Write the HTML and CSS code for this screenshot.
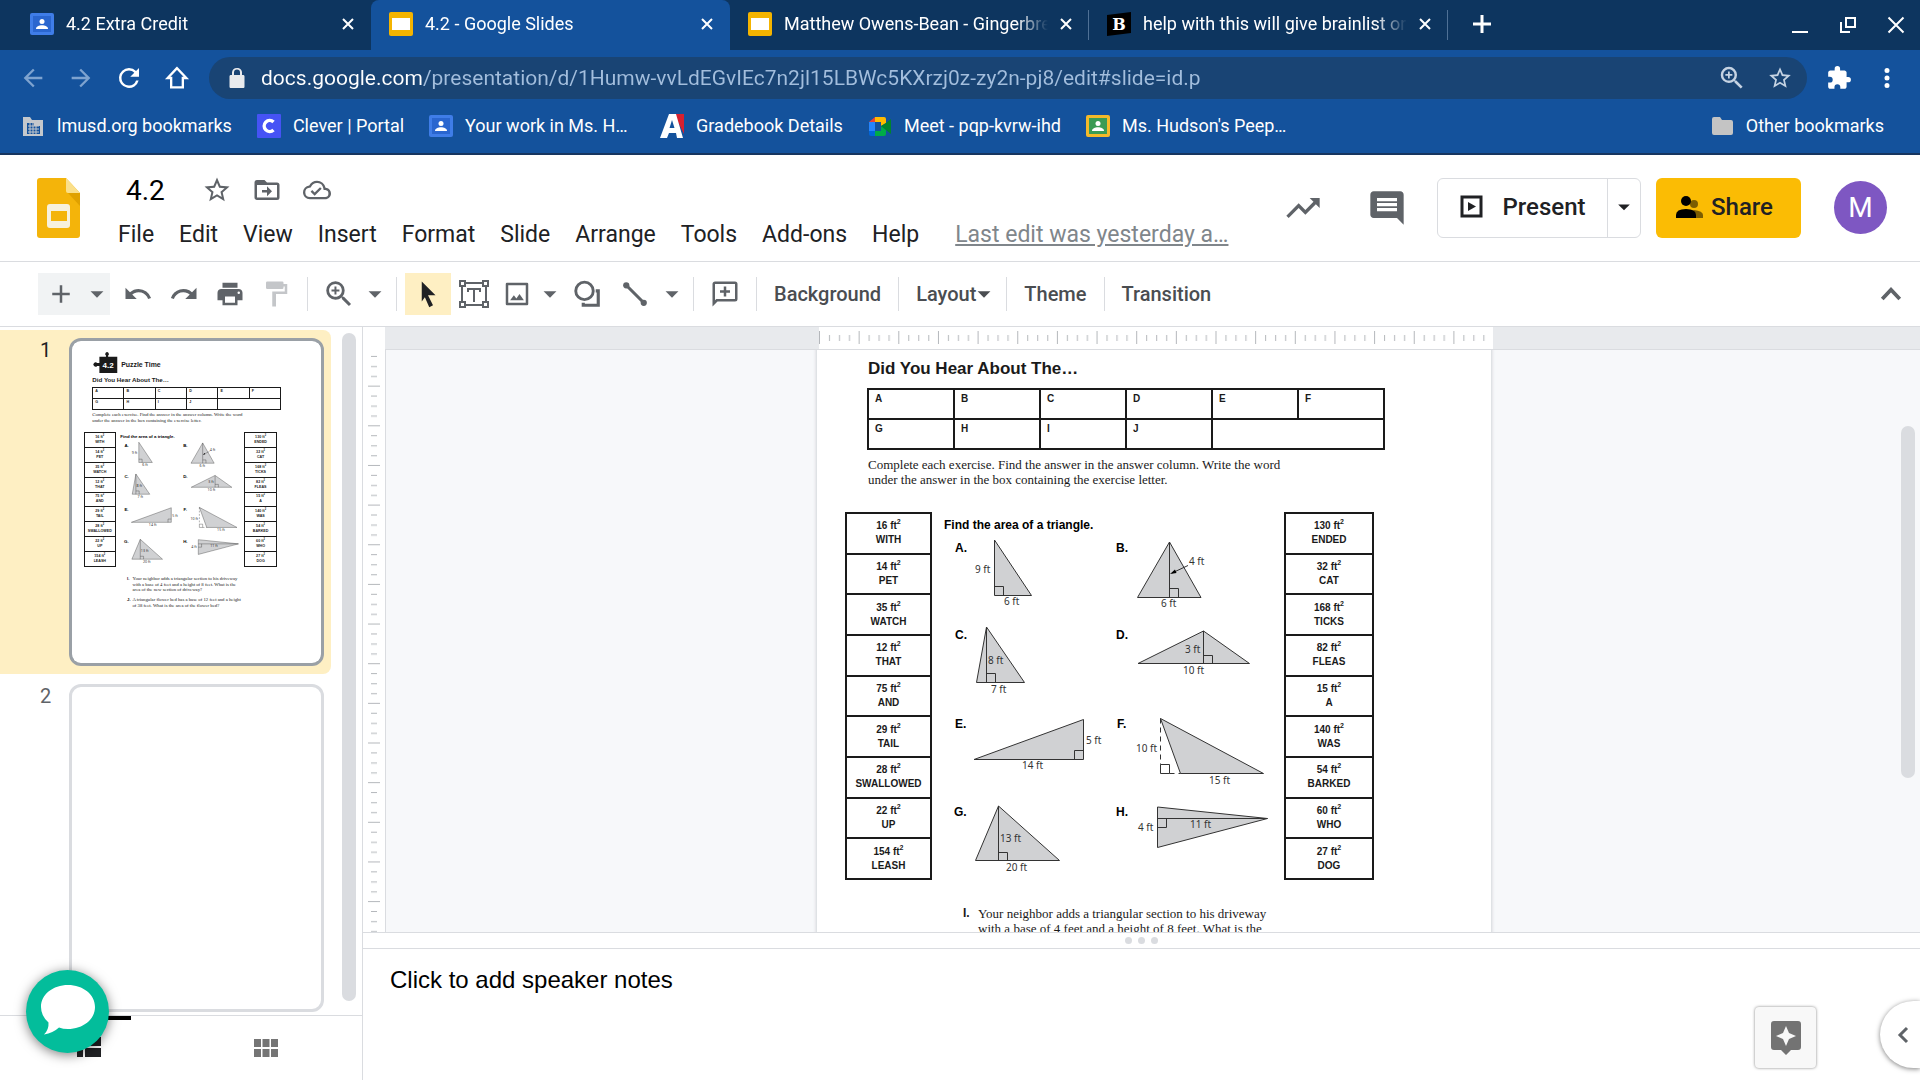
FILE: index.html
```html
<!DOCTYPE html>
<html lang="en">
<head>
    <meta charset="UTF-8">
    <meta name="viewport" content="width=device-width, initial-scale=1.0">
    <title>4.2 - Google Slides</title>
    <link rel="stylesheet" href="styles.css">
</head>
<body>
    <!-- shared icons -->
    <svg class="defs" width="0" height="0" aria-hidden="true">
        <symbol id="i-close" viewBox="0 0 14 14"><path d="M2 2l10 10M12 2L2 12" stroke="currentColor" stroke-width="2" fill="none"/></symbol>
        <symbol id="i-arrow" viewBox="0 0 24 24"><path d="M5 9h14l-7 7z" fill="currentColor"/></symbol>
        <symbol id="i-slides" viewBox="0 0 24 24"><rect width="24" height="24" rx="2" fill="#f4b400"/><rect x="3" y="6" width="18" height="12" fill="#fff"/></symbol>
        <symbol id="i-class" viewBox="0 0 24 24"><rect width="24" height="22" y="1" rx="2" fill="#3f7de8"/><rect x="3" y="4" width="18" height="16" fill="#2a66cf"/><circle cx="12" cy="9.500" r="2.500" fill="#fff"/><path d="M6 17c0-5 12-5 12 0z" fill="#fff"/></symbol>
        <symbol id="i-star" viewBox="0 0 24 24"><path fill="currentColor" d="M22 9.240l-7.190-.620L12 2 9.190 8.630 2 9.240l5.460 4.730L5.820 21 12 17.270 18.180 21l-1.630-7.030L22 9.240zM12 15.400l-3.760 2.270 1-4.280-3.320-2.880 4.380-.380L12 6.100l1.710 4.040 4.380.380-3.320 2.880 1 4.280L12 15.400z"/></symbol>
        <symbol id="i-zoom" viewBox="0 0 24 24"><path fill="currentColor" d="M15.500 14h-.790l-.280-.270A6.471 6.471 0 0 0 16 9.500 6.500 6.500 0 1 0 9.500 16c1.610 0 3.090-.590 4.230-1.570l.270.280v.790l5 4.990L20.490 19l-4.990-5zm-6 0C7.010 14 5 11.990 5 9.500S7.010 5 9.500 5 14 7.010 14 9.500 11.990 14 9.500 14zM10.200 6.700H8.800v2.100H6.700v1.400h2.100v2.100h1.400v-2.100h2.100V8.800h-2.100z"/></symbol>
    </svg>

    <div class="browser">
        <div class="tabs">
            <div class="tab">
                <svg class="fav"><use href="#i-class"/></svg>
                <span>4.2 Extra Credit</span>
                <button aria-label="Close tab"><svg><use href="#i-close"/></svg></button>
            </div>
            <div class="tab active">
                <svg class="fav"><use href="#i-slides"/></svg>
                <span>4.2 - Google Slides</span>
                <button aria-label="Close tab"><svg><use href="#i-close"/></svg></button>
            </div>
            <div class="tab divided">
                <svg class="fav"><use href="#i-slides"/></svg>
                <span>Matthew Owens-Bean - Gingerbread</span>
                <button aria-label="Close tab"><svg><use href="#i-close"/></svg></button>
            </div>
            <div class="tab divided">
                <svg class="fav" viewBox="0 0 24 24"><path d="M0 3l24-3v21L0 24z"/><text x="12" y="18" class="fav-b">B</text></svg>
                <span>help with this will give brainlist or</span>
                <button aria-label="Close tab"><svg><use href="#i-close"/></svg></button>
            </div>
            <button class="new-tab" aria-label="New tab"><svg width="18" height="18" viewBox="0 0 18 18"><path d="M9 0v18M0 9h18" stroke="#fff" stroke-width="3"/></svg></button>
            <div class="window">
                <button aria-label="Minimize"><svg width="18" height="18" viewBox="0 0 18 18"><path d="M1 16h16" stroke="#fff" stroke-width="2"/></svg></button>
                <button aria-label="Restore"><svg width="18" height="18" viewBox="0 0 18 18"><path d="M7 2h9v9H7zM2 6v10h9" stroke="#fff" stroke-width="2" fill="none"/></svg></button>
                <button aria-label="Close"><svg width="18" height="18" viewBox="0 0 18 18"><path d="M1.500 1.500l15 15M16.500 1.500l-15 15" stroke="#fff" stroke-width="2"/></svg></button>
            </div>
        </div>

        <div class="location">
            <button class="dim" aria-label="Back"><svg width="28" height="28" viewBox="0 0 24 24"><path fill="currentColor" d="M20 11H7.830l5.590-5.590L12 4l-8 8 8 8 1.410-1.410L7.830 13H20z"/></svg></button>
            <button class="dim" aria-label="Forward"><svg width="28" height="28" viewBox="0 0 24 24"><path fill="currentColor" d="M12 4l-1.410 1.410L16.170 11H4v2h12.170l-5.580 5.590L12 20l8-8z"/></svg></button>
            <button aria-label="Reload"><svg width="30" height="30" viewBox="0 0 24 24"><path fill="currentColor" d="M17.650 6.350A7.958 7.958 0 0 0 12 4a8 8 0 1 0 7.730 10h-2.080A5.990 5.990 0 0 1 12 18c-3.310 0-6-2.690-6-6s2.690-6 6-6c1.660 0 3.140.690 4.220 1.780L13 11h7V4z"/></svg></button>
            <button aria-label="Home"><svg width="28" height="28" viewBox="0 0 24 24"><path fill="none" stroke="currentColor" stroke-width="2" d="M12 3.500L4 12h3v8h10v-8h3z"/></svg></button>
            <label class="address">
                <svg width="24" height="24" viewBox="0 0 24 24"><path fill="#e8eaed" d="M18 9h-1V6.500C17 4 15 2 12 2S7 4 7 6.500V9H6c-1 0-1.500.500-1.500 1.500v10c0 1 .500 1.500 1.500 1.500h12c1 0 1.500-.500 1.500-1.500v-10C19.500 9.500 19 9 18 9zM9 9V6.500a3 3 0 0 1 6 0V9z"/></svg>
                <input aria-label="Address" value="docs.google.com/presentation/d/1Humw-vvLdEGvIEc7n2jl15LBWc5KXrzj0z-zy2n-pj8/edit#slide=id.p">
                <button aria-label="Zoom"><svg width="30" height="30"><use href="#i-zoom"/></svg></button>
                <button aria-label="Bookmark"><svg width="26" height="26"><use href="#i-star"/></svg></button>
            </label>
            <button aria-label="Extensions"><svg width="26" height="26" viewBox="0 0 24 24"><path fill="currentColor" d="M20.500 11H19V7c0-1.100-.900-2-2-2h-4V3.500a2.500 2.500 0 0 0-5 0V5H4c-1.100 0-1.990.900-1.990 2v3.800H3.500a2.700 2.700 0 0 1 0 5.400H2V20c0 1.100.900 2 2 2h3.800v-1.500a2.700 2.700 0 0 1 5.400 0V22H17c1.100 0 2-.900 2-2v-4h1.500a2.500 2.500 0 0 0 0-5z"/></svg></button>
            <button aria-label="Menu"><svg width="30" height="30" viewBox="0 0 24 24"><path fill="currentColor" d="M12 8a2 2 0 1 0 0-4 2 2 0 0 0 0 4zm0 2a2 2 0 1 0 0 4 2 2 0 0 0 0-4zm0 6a2 2 0 1 0 0 4 2 2 0 0 0 0-4z"/></svg></button>
        </div>

        <nav class="bookmarks">
            <a href="#"><svg viewBox="0 0 24 24"><path fill="#c4c8cc" d="M2 3h7l2 3h11v16H2z"/><path d="M6 9h7v3h6v8H6z" fill="#14529c"/><path d="M7 12h11M7 15h11M7 18h11M9 9v11M12 9v11M15 12v8" stroke="#c4c8cc"/></svg><span>lmusd.org bookmarks</span></a>
            <a href="#"><svg viewBox="0 0 24 24"><rect width="24" height="24" rx="1" fill="#4653f5"/><path d="M16.500 8a5.500 5.500 0 1 0 0 8" fill="none" stroke="#fff" stroke-width="3.500"/></svg><span>Clever | Portal</span></a>
            <a href="#"><svg><use href="#i-class"/></svg><span class="clipped">Your work in Ms. H…</span></a>
            <a href="#"><svg viewBox="0 0 24 24"><path d="M14 0h10v20z" fill="#d6202f"/><path d="M9 0h7l7 24h-6l-1-5H9l-2 5H0zM12 6l-2.500 8h5z" fill="#fff" fill-rule="evenodd"/></svg><span>Gradebook Details</span></a>
            <a href="#"><svg viewBox="0 0 24 24"><path d="M7 3v5H1z" fill="#ea4335"/><path d="M1 8h6v9H1z" fill="#2684fc"/><path d="M1 17h6v5H3q-2 0-2-2z" fill="#0066da"/><path d="M7 3h9q2 0 2 2v4l-5 3V8H7z" fill="#ffba00"/><path d="M7 22v-5h6v-5l5 4v4q0 2-2 2z" fill="#00ac47"/><path d="M18 9l5-4v15l-5-4-5-4z" fill="#00832d"/></svg><span>Meet - pqp-kvrw-ihd</span></a>
            <a href="#"><svg viewBox="0 0 24 24"><rect width="24" height="22" y="1" rx="2" fill="#f4b92a"/><rect x="3" y="4" width="18" height="16" fill="#3a9b54"/><circle cx="12" cy="9.500" r="2.500" fill="#fff"/><path d="M6 17c0-5 12-5 12 0z" fill="#fff"/></svg><span>Ms. Hudson's Peep…</span></a>
            <a class="other" href="#"><svg viewBox="0 0 24 24"><path fill="#c4c4c4" d="M4 3h6l2 3h9q2 0 2 2v11q0 2-2 2H4q-2 0-2-2V5q0-2 2-2z"/></svg><span>Other bookmarks</span></a>
        </nav>
    </div>

    <header class="header">
        <svg class="logo" viewBox="0 0 43 60"><path d="M3 0h26l14 15v42q0 3-3 3H3q-3 0-3-3V3q0-3 3-3z" fill="#f4b40a"/><path d="M29 0l14 15H31q-2 0-2-2z" fill="#fadf8a"/><path d="M31 15h12v13z" fill="#e0a100"/><path d="M13 26h17q3 0 3 3v18q0 3-3 3H13q-3 0-3-3V29q0-3 3-3zm1 7v10h16V33z" fill="#f7f1dc" fill-rule="evenodd"/></svg>
        <div class="doc">
            <div class="title-row">
                <input aria-label="Rename" value="4.2">
                <button aria-label="Star"><svg width="30" height="30"><use href="#i-star"/></svg></button>
                <button aria-label="Move"><svg width="30" height="30" viewBox="0 0 24 24"><path fill="currentColor" d="M20 6h-8l-2-2H4a2 2 0 0 0-2 2v12c0 1.100.900 2 2 2h16a2 2 0 0 0 2-2V8a2 2 0 0 0-2-2zm0 12H4V8h16v10zm-8-1l4-4-4-4v3H8v2h4z"/></svg></button>
                <button aria-label="Saved to Drive"><svg width="28" height="28" viewBox="0 0 24 24"><path fill="currentColor" d="M19.350 10.040A7.490 7.490 0 0 0 12 4C9.110 4 6.600 5.640 5.350 8.040A5.994 5.994 0 0 0 0 14c0 3.310 2.690 6 6 6h13c2.760 0 5-2.240 5-5 0-2.640-2.050-4.780-4.650-4.960zM19 18H6a4 4 0 0 1-.500-7.970l1.070-.110.500-.950a5.500 5.500 0 0 1 10.310 1.460l.300 1.500 1.530.110A3 3 0 0 1 19 18zm-9-3.820l-2.090-2.090L6.500 13.500 10 17l6.010-6.010-1.410-1.410z"/></svg></button>
            </div>
            <div class="menus">
                <button>File</button>
                <button>Edit</button>
                <button>View</button>
                <button>Insert</button>
                <button>Format</button>
                <button>Slide</button>
                <button>Arrange</button>
                <button>Tools</button>
                <button>Add-ons</button>
                <button>Help</button>
                <a href="#">Last edit was yesterday a…</a>
            </div>
        </div>
        <div class="actions">
            <button class="icon" aria-label="Activity"><svg width="40" height="40" viewBox="0 0 24 24"><path fill="currentColor" d="M16 6l2.290 2.290-4.880 4.880-4-4L2 16.590 3.410 18l6-6 4 4 6.300-6.290L22 12V6z"/></svg></button>
            <button class="icon" aria-label="Comments"><svg width="40" height="40" viewBox="0 0 24 24"><path fill="currentColor" d="M21.990 4c0-1.100-.890-2-1.990-2H4c-1.100 0-2 .900-2 2v12c0 1.100.900 2 2 2h14l4 4-.010-18zM18 14H6v-2h12v2zm0-3H6V9h12v2zm0-3H6V6h12v2z"/></svg></button>
            <div class="present">
                <button><svg width="23" height="23" viewBox="0 0 23 23"><path d="M2 2h19v19H2z" fill="none" stroke="currentColor" stroke-width="3"/><path d="M8 7l8 4.500L8 16z" fill="currentColor"/></svg>Present</button>
                <button aria-label="Present options"><svg width="20" height="20"><use href="#i-arrow"/></svg></button>
            </div>
            <button class="share"><svg width="27" height="22" viewBox="0 0 27 22"><g opacity=".5"><circle cx="18" cy="8" r="4"/><path d="M12 22h15v-3q0-4-9-5z"/></g><circle cx="10" cy="5" r="5"/><path d="M0 22v-3q0-6 10-6t10 6v3z"/></svg>Share</button>
            <button class="avatar" aria-label="Account">M</button>
        </div>
    </header>

    <div class="toolbar">
        <div class="new-slide">
            <button aria-label="New slide"><svg width="30" height="30" viewBox="0 0 24 24"><path fill="currentColor" d="M19 13h-6v6h-2v-6H5v-2h6V5h2v6h6z"/></svg></button>
            <button class="arrow" aria-label="New slide with layout"><svg><use href="#i-arrow"/></svg></button>
        </div>
        <button aria-label="Undo"><svg viewBox="0 0 24 24"><path fill="currentColor" d="M12.500 8c-2.650 0-5.050.990-6.900 2.600L2 7v9h9l-3.620-3.620A7.990 7.990 0 0 1 20.080 16l2.370-.780A10.510 10.510 0 0 0 12.500 8z"/></svg></button>
        <button aria-label="Redo"><svg viewBox="0 0 24 24"><path fill="currentColor" d="M18.400 10.600A10.460 10.460 0 0 0 1.540 15.220L3.900 16a8.002 8.002 0 0 1 12.710-3.620L13 16h9V7z"/></svg></button>
        <button aria-label="Print"><svg viewBox="0 0 24 24"><path fill="currentColor" d="M19 8H5c-1.660 0-3 1.340-3 3v6h4v4h12v-4h4v-6c0-1.660-1.340-3-3-3zm-3 11H8v-5h8v5zm3-7a1 1 0 1 1 0-2 1 1 0 0 1 0 2zM18 3H6v4h12z"/></svg></button>
        <button class="off" aria-label="Paint format"><svg viewBox="0 0 24 24"><path fill="currentColor" d="M18 4V3a1 1 0 0 0-1-1H5a1 1 0 0 0-1 1v4a1 1 0 0 0 1 1h12a1 1 0 0 0 1-1V6h1v4H9v12h3V12h9V4z"/></svg></button>
        <i></i>
        <button aria-label="Zoom"><svg class="big"><use href="#i-zoom"/></svg></button>
        <button class="arrow" aria-label="Zoom options"><svg><use href="#i-arrow"/></svg></button>
        <i></i>
        <button class="on" aria-label="Select"><svg viewBox="0 0 24 24"><path fill="#202124" d="M7 2l11 11h-6l4 8-3 1.500-3.500-8L7 18z"/></svg></button>
        <button aria-label="Text box"><svg viewBox="0 0 30 30"><path d="M3 4h24v22H3z" fill="none" stroke="currentColor" stroke-width="2"/><path d="M8 9h14v4h-2v-2h-4v12h-2V11h-4v2H8z" fill="currentColor"/><path d="M1 2h5v5H1zM24 2h5v5h-5zM1 23h5v5H1zM24 23h5v5h-5z" fill="#fff" stroke="currentColor" stroke-width="2"/></svg></button>
        <button class="narrow" aria-label="Insert image"><svg viewBox="0 0 24 24"><path d="M4 4h16v16H4z" fill="none" stroke="currentColor" stroke-width="2" stroke-linejoin="round"/><path d="M6.500 17l3-4 2 2.500 2.500-3.500 3.500 5z" fill="currentColor"/></svg></button>
        <button class="arrow" aria-label="Image options"><svg><use href="#i-arrow"/></svg></button>
        <button class="wide" aria-label="Shape"><svg viewBox="0 0 24 24"><circle cx="10" cy="9.500" r="7" fill="none" stroke="currentColor" stroke-width="2.300"/><path d="M19 9.500h2V21H9v-2" fill="none" stroke="currentColor" stroke-width="2.500"/></svg></button>
        <button class="wide" aria-label="Line"><svg viewBox="0 0 24 24"><path d="M5 5l14 14" stroke="currentColor" stroke-width="2.500"/><circle cx="5" cy="5" r="2.500" fill="currentColor"/><circle cx="19" cy="19" r="2.500" fill="currentColor"/></svg></button>
        <button class="arrow" aria-label="Line options"><svg><use href="#i-arrow"/></svg></button>
        <i></i>
        <button aria-label="Add comment"><svg viewBox="0 0 24 24"><path fill="currentColor" d="M20 2H4c-1.100 0-2 .900-2 2v18l4-4h14a2 2 0 0 0 2-2V4a2 2 0 0 0-2-2zm0 14H5l-1 1V4h16zm-9-2h2v-3h3V9h-3V6h-2v3H8v2h3z"/></svg></button>
        <i></i>
        <button class="text">Background</button>
        <i></i>
        <button class="text">Layout<svg><use href="#i-arrow"/></svg></button>
        <i></i>
        <button class="text">Theme</button>
        <i></i>
        <button class="text">Transition</button>
        <button class="collapse" aria-label="Hide menus"><svg viewBox="0 0 24 24"><path d="M5 16l7-7.500 7 7.500" fill="none" stroke="currentColor" stroke-width="3"/></svg></button>
    </div>

    <main class="main">
        <aside class="filmstrip">
            <div class="slides">
                <div class="item selected"><span>1</span><div class="thumb" id="thumb"></div></div>
                <div class="item"><span>2</span><div class="thumb"></div></div>
                <div class="scrollbar"></div>
            </div>
            <div class="views">
                <button class="current" aria-label="Filmstrip view"><svg width="24" height="24" viewBox="0 0 24 24"><path fill="currentColor" d="M0 1h6v9H0zM8 1h16v9H8zM0 12h6v9H0zM8 12h16v9H8z"/></svg></button>
                <button aria-label="Grid view"><svg width="24" height="20" viewBox="0 0 24 20"><path fill="currentColor" d="M0 1h7v8H0zM8.500 1h7v8h-7zM17 1h7v8h-7zM0 11h7v8H0zM8.500 11h7v8h-7zM17 11h7v8h-7z"/></svg></button>
            </div>
        </aside>

        <section class="editor">
            <div class="ruler-top">
                <svg width="674" height="22">
                    <defs><pattern id="ticks-x" width="39.650" height="22" patternUnits="userSpaceOnUse"><path d="M.500 4v13M10.500 8v6M20.500 8v6M30.500 8v6" stroke="#b4b7bb"/></pattern></defs>
                    <rect width="674" height="22" fill="#fff"/>
                    <rect width="674" height="22" fill="url(#ticks-x)"/>
                </svg>
            </div>
            <div class="stage">
                <svg class="ruler-left" width="22">
                    <defs><pattern id="ticks-y" y="-4" width="22" height="39.650" patternUnits="userSpaceOnUse"><path d="M5 .500h12M8 10.500h6M8 20.500h6M8 30.500h6" stroke="#b4b7bb"/></pattern></defs>
                    <rect width="22" height="100%" fill="url(#ticks-y)"/>
                </svg>
                <div class="canvas">
                    <article class="worksheet" id="slide">
                        <div class="brand">
                            <svg width="72" height="60" viewBox="0 0 72 60"><path d="M23 16h18v-4a5 5 0 1 1 6 0v4h25v44H23V41h-6a6 6 0 1 1 0-8h6z" fill="#1a1a1a"/><text x="47" y="46">4.2</text></svg>
                            <span>Puzzle Time</span>
                        </div>
                        <h2>Did You Hear About The…</h2>
                        <table class="letters">
                            <tr><td>A</td><td>B</td><td>C</td><td>D</td><td>E</td><td>F</td></tr>
                            <tr><td>G</td><td>H</td><td>I</td><td>J</td><td colspan="2"></td></tr>
                        </table>
                        <p class="intro">Complete each exercise. Find the answer in the answer column. Write the word<br>under the answer in the box containing the exercise letter.</p>
                        <div class="match">
                            <table class="answers">
                                <tr><td>16 ft<sup>2</sup><br>WITH</td></tr>
                                <tr><td>14 ft<sup>2</sup><br>PET</td></tr>
                                <tr><td>35 ft<sup>2</sup><br>WATCH</td></tr>
                                <tr><td>12 ft<sup>2</sup><br>THAT</td></tr>
                                <tr><td>75 ft<sup>2</sup><br>AND</td></tr>
                                <tr><td>29 ft<sup>2</sup><br>TAIL</td></tr>
                                <tr><td>28 ft<sup>2</sup><br>SWALLOWED</td></tr>
                                <tr><td>22 ft<sup>2</sup><br>UP</td></tr>
                                <tr><td>154 ft<sup>2</sup><br>LEASH</td></tr>
                            </table>
                            <svg class="figures" width="352" height="368" viewBox="932 512 352 368">
                                <g class="bold">
                                    <text x="944" y="529">Find the area of a triangle.</text>
                                    <text x="955" y="552">A.</text><text x="1116" y="552">B.</text>
                                    <text x="955" y="639">C.</text><text x="1116" y="639">D.</text>
                                    <text x="955" y="728">E.</text><text x="1117" y="728">F.</text>
                                    <text x="954" y="816">G.</text><text x="1116" y="816">H.</text>
                                </g>
                                <g class="shape">
                                    <path d="M994.500 540v55.500h37z"/>
                                    <path d="M1169.500 542l-32 55.500h63.500z"/>
                                    <path d="M986.500 627l-10 55.500h48z"/>
                                    <path d="M1203.500 631l-65.500 32.500h111.500z"/>
                                    <path d="M974 759.500l109.500-40v40z"/>
                                    <path d="M1160.500 718.500l20 55h83z"/>
                                    <path d="M998.500 806l-23 54.500h84z"/>
                                    <path d="M1157.500 807v40.500l110-29z"/>
                                </g>
                                <g class="line">
                                    <path d="M994.500 586.500h9v9"/>
                                    <path d="M1169.500 542v55.500M1169.500 588.500h9v9M1188 565.500l-16 7.500"/>
                                    <path d="M986.500 627v55.500M986.500 673.500h9v9"/>
                                    <path d="M1203.500 631v32.500M1203.500 655.500h9v8"/>
                                    <path d="M1083.500 750.500h-9v9"/>
                                    <path d="M1160.500 764.500h9v9M1160.500 764.500v9h9"/>
                                    <path d="M1160.500 718.500v46M1169.500 773.500h11" stroke-dasharray="5 4"/>
                                    <path d="M998.500 806v54.500M998.500 852.500h9v8"/>
                                    <path d="M1157.500 818.500h110M1166.500 818.500v9h-9"/>
                                </g>
                                <path d="M1170 574l5-4.500 1.500 3.500z"/>
                                <g class="size">
                                    <text x="975" y="573">9 ft</text><text x="1004" y="605">6 ft</text>
                                    <text x="1189" y="565">4 ft</text><text x="1161" y="607">6 ft</text>
                                    <text x="988" y="664">8 ft</text><text x="991" y="693">7 ft</text>
                                    <text x="1185" y="653">3 ft</text><text x="1183" y="674">10 ft</text>
                                    <text x="1086" y="744">5 ft</text><text x="1022" y="769">14 ft</text>
                                    <text x="1136" y="752">10 ft</text><text x="1209" y="784">15 ft</text>
                                    <text x="1000" y="842">13 ft</text><text x="1006" y="871">20 ft</text>
                                    <text x="1138" y="831">4 ft</text><text x="1190" y="828">11 ft</text>
                                </g>
                            </svg>
                            <table class="answers">
                                <tr><td>130 ft<sup>2</sup><br>ENDED</td></tr>
                                <tr><td>32 ft<sup>2</sup><br>CAT</td></tr>
                                <tr><td>168 ft<sup>2</sup><br>TICKS</td></tr>
                                <tr><td>82 ft<sup>2</sup><br>FLEAS</td></tr>
                                <tr><td>15 ft<sup>2</sup><br>A</td></tr>
                                <tr><td>140 ft<sup>2</sup><br>WAS</td></tr>
                                <tr><td>54 ft<sup>2</sup><br>BARKED</td></tr>
                                <tr><td>60 ft<sup>2</sup><br>WHO</td></tr>
                                <tr><td>27 ft<sup>2</sup><br>DOG</td></tr>
                            </table>
                        </div>
                        <dl class="problems">
                            <dt>I.</dt>
                            <dd>Your neighbor adds a triangular section to his driveway<br>with a base of 4 feet and a height of 8 feet. What is the<br>area of the new section of driveway?</dd>
                            <dt>J.</dt>
                            <dd>A triangular flower bed has a base of 12 feet and a height<br>of 38 feet. What is the area of the flower bed?</dd>
                        </dl>
                    </article>
                    <div class="scrollbar"></div>
                </div>
            </div>
            <div class="splitter"><b></b><b></b><b></b></div>
            <textarea class="notes" aria-label="Speaker notes">Click to add speaker notes</textarea>
        </section>
    </main>

    <button class="chat" aria-label="Chat"><svg width="54" height="50" viewBox="0 0 54 50"><path fill="#fff" d="M27 0c15 0 27 9.500 27 22S42 44 27 44q-5 0-9-1.500-6 5.500-15 7 5-5 4.500-12Q0 31 0 22C0 9.500 12 0 27 0z"/></svg></button>
    <button class="explore" aria-label="Explore"><svg width="30" height="34" viewBox="0 0 30 34"><path fill="#737373" fill-rule="evenodd" d="M3 0h24q3 0 3 3v23q0 3-3 3h-7l-5 5-5-5H3q-3 0-3-3V3q0-3 3-3zm12 5l-3 7-7 3 7 3 3 7 3-7 7-3-7-3z"/></svg></button>
    <button class="side-tab" aria-label="Show side panel"><svg width="12" height="18" viewBox="0 0 12 18"><path d="M10 2L3 9l7 7" fill="none" stroke="#5f6368" stroke-width="3"/></svg></button>

    <script>
        // the first thumbnail is a small copy of the open slide
        const copy = document.getElementById('slide').cloneNode(true)
        copy.removeAttribute('id')
        document.getElementById('thumb').appendChild(copy)
    </script>
</body>
</html>
```
FILE: styles.css
```css
* {
    box-sizing: border-box;
}

body {
    margin: 0;
    height: 100vh;
    display: flex;
    flex-direction: column;
    overflow: hidden;
    font-family: Roboto, "Liberation Sans", sans-serif;
    color: #202124;
    background: #fff;
}

button {
    display: flex;
    align-items: center;
    justify-content: center;
    flex: none;
    margin: 0;
    padding: 0;
    border: 0;
    background: none;
    color: inherit;
    font: inherit;
}

input,
textarea {
    border: 0;
    outline: 0;
    background: none;
    font: inherit;
    color: inherit;
}

a {
    color: inherit;
    text-decoration: none;
}

svg {
    flex: none;
}

.defs {
    position: absolute;
}

/* browser */

.browser {
    background: #14529c;
    color: #fff;
    font-size: 18px;
    border-bottom: 2px solid #17355f;
}

.tabs {
    display: flex;
    height: 50px;
    padding-left: 12px;
    background: #0d355f;
}

.tab {
    display: flex;
    align-items: center;
    width: 359px;
    padding: 0 16px 3px 18px;
    position: relative;
}

.tab span {
    flex: 1;
    margin: 0 11px 0 12px;
    overflow: hidden;
    white-space: nowrap;
    mask-image: linear-gradient(to left, transparent, #000 32px);
}

.tab svg {
    width: 14px;
    height: 14px;
}

.tab .fav {
    width: 24px;
    height: 24px;
}

.fav-b {
    font: bold 16px "DejaVu Serif", serif;
    fill: #fff;
    text-anchor: middle;
}

.tab.active {
    background: #14529c;
    border-radius: 8px 8px 0 0;
}

.tab.divided::after {
    content: "";
    position: absolute;
    right: 0;
    top: 10px;
    width: 1px;
    height: 30px;
    background: #4f7196;
}

.new-tab {
    width: 68px;
    padding-bottom: 3px;
}

.window {
    display: flex;
    margin-left: auto;
}

.window button {
    width: 48px;
}

.location {
    display: flex;
    align-items: center;
    height: 52px;
    padding: 4px 9px 0;
}

.location > button {
    width: 48px;
}

.location .dim {
    color: #7ea3cf;
}

.address {
    flex: 1;
    display: flex;
    align-items: center;
    height: 42px;
    margin: 0 8px;
    padding: 0 3px 0 16px;
    border-radius: 21px;
    background: #194474;
    color: #c5d3e3;
}

/* host name is brighter than the path */
.address input {
    flex: 1;
    padding: 0 0 0 12px;
    font-size: 21px;
    background: linear-gradient(to right, #fff 173px, #a3bedd 173px);
    background-clip: text;
    color: transparent;
}

.address button {
    width: 48px;
}

.bookmarks {
    display: flex;
    align-items: center;
    gap: 25px;
    height: 51px;
    padding: 0 36px 4px 21px;
}

.bookmarks a {
    display: flex;
    align-items: center;
    gap: 12px;
    white-space: nowrap;
}

.bookmarks svg {
    width: 24px;
    height: 24px;
}

.bookmarks .clipped {
    min-width: 170px;
}

.bookmarks .other {
    margin-left: auto;
}

/* document header */

.header {
    display: flex;
    height: 107px;
    padding: 0 33px 0 37px;
    border-bottom: 1px solid #dadce0;
}

.logo {
    width: 43px;
    height: 60px;
    margin-top: 23px;
}

.doc {
    margin-left: 26px;
    padding-top: 13px;
}

.title-row,
.menus {
    display: flex;
    align-items: center;
    height: 44px;
}

.title-row {
    color: #5f6368;
}

.title-row input {
    width: 86px;
    padding: 0 20px;
    font-size: 28px;
    color: #000;
}

.title-row button {
    width: 50px;
}

.menus {
    gap: 1px;
    font-size: 23px;
}

.menus button {
    padding: 0 12px;
}

.menus a {
    margin-left: 23px;
    color: #80868b;
    text-decoration: underline;
}

.actions {
    display: flex;
    align-items: center;
    margin-left: auto;
    padding-bottom: 1px;
    font-size: 24px;
    font-weight: 500;
}

.actions .icon {
    width: 48px;
    margin-right: 36px;
    color: #5f6368;
}

.actions .icon + .icon {
    margin-right: 26px;
}

.present {
    display: flex;
    width: 204px;
    height: 60px;
    border: 1px solid #dadce0;
    border-radius: 6px;
}

.present button {
    flex: 1;
    gap: 20px;
    padding-bottom: 2px;
}

.present button + button {
    flex: none;
    width: 33px;
    border-left: 1px solid #dadce0;
}

.share {
    gap: 8px;
    width: 145px;
    height: 60px;
    margin: 0 33px 0 15px;
    padding: 0 8px 2px 0;
    border-radius: 6px;
    background: #fbbc04;
}

.avatar {
    width: 53px;
    height: 53px;
    border-radius: 50%;
    background: #7e57c2;
    color: #fff;
    font-size: 28px;
    font-weight: 400;
}

/* toolbar */

.toolbar {
    display: flex;
    align-items: center;
    height: 65px;
    padding: 0 14px 0 38px;
    border-bottom: 1px solid #dadce0;
    color: #5f6368;
}

.toolbar button {
    width: 46px;
    height: 42px;
}

.toolbar svg {
    width: 30px;
    height: 30px;
}

.toolbar .big {
    width: 34px;
    height: 34px;
}

.toolbar .arrow {
    width: 26px;
}

.toolbar .arrow svg,
.toolbar .text svg {
    width: 22px;
    height: 22px;
}

.toolbar .narrow {
    width: 40px;
}

.toolbar .wide {
    width: 48px;
}

.toolbar .off {
    color: #c4c6c9;
}

.toolbar .on {
    background: #feefc3;
}

.toolbar i {
    width: 1px;
    height: 34px;
    margin: 0 8px;
    background: #dadce0;
}

.toolbar .text {
    width: auto;
    padding: 0 9px;
    font-size: 20px;
    font-weight: 500;
    color: #4a4d51;
}

.toolbar .text svg {
    margin: 0 -6px 0 -3px;
}

.toolbar .collapse {
    width: 30px;
    margin-left: auto;
}

.new-slide {
    display: flex;
    margin-right: 5px;
    background: #f1f3f4;
}

/* slide list */

.main {
    flex: 1;
    display: flex;
    min-height: 0;
}

.filmstrip {
    display: flex;
    flex-direction: column;
    width: 363px;
    border-right: 1px solid #dadce0;
}

.slides {
    flex: 1;
    min-height: 0;
    padding-top: 3px;
    position: relative;
    overflow: hidden;
}

.item {
    display: flex;
    width: 331px;
    height: 344px;
    margin-bottom: 2px;
    padding: 8px 0 0 40px;
    border-radius: 0 8px 8px 0;
    font-size: 20px;
    color: #5f6368;
}

.item > span {
    width: 29px;
}

.item.selected {
    background: #feefc3;
    color: #202124;
}

.thumb {
    width: 255px;
    height: 328px;
    padding: 1px;
    border: 3px solid #dadce0;
    border-radius: 12px;
    background: #fff;
    overflow: hidden;
}

.selected .thumb {
    border-color: #9aa0a6;
}

.thumb .worksheet {
    zoom: 0.365;
    margin: 2px;
    box-shadow: none;
}

.scrollbar {
    position: absolute;
    width: 14px;
    border-radius: 7px;
    background: #dadce0;
}

.slides .scrollbar {
    top: 6px;
    right: 6px;
    bottom: 14px;
}

.views {
    display: flex;
    height: 65px;
    padding-right: 8px;
    border-top: 1px solid #dadce0;
    color: #757575;
}

.views button {
    flex: 1;
    position: relative;
}

.views .current {
    color: #202124;
}

.views .current::before {
    content: "";
    position: absolute;
    top: 0;
    left: 46px;
    right: 46px;
    height: 4px;
    background: #000;
}

/* editor */

.editor {
    flex: 1;
    display: flex;
    flex-direction: column;
    min-width: 0;
}

.ruler-top {
    display: flex;
    justify-content: center;
    height: 23px;
    margin-left: 22px;
    padding-left: 6px;
    border-bottom: 1px solid #dadce0;
    background: #e8eaed;
}

.stage {
    flex: 1;
    display: flex;
    min-height: 0;
}

.ruler-left {
    height: 100%;
}

.canvas {
    flex: 1;
    position: relative;
    padding-left: 2px;
    border-left: 1px solid #dadce0;
    background: #f7f8fa;
    overflow: hidden;
}

.canvas .scrollbar {
    top: 76px;
    right: 5px;
    height: 352px;
}

.canvas .worksheet {
    margin: -83px auto 0;
}

.splitter {
    display: flex;
    align-items: center;
    justify-content: center;
    gap: 6px;
    height: 17px;
    border: solid #dadce0;
    border-width: 1px 0;
}

.splitter b {
    width: 7px;
    height: 7px;
    border-radius: 50%;
    background: #dadce0;
}

.notes {
    height: 131px;
    padding: 17px 27px;
    resize: none;
    font: 24px/28px "Liberation Sans", Arial, sans-serif;
    color: #000;
}

/* worksheet on the slide */

.worksheet {
    width: 674px;
    height: 872px;
    padding: 22px 0 0 28px;
    background: #fff;
    color: #1a1a1a;
    font: 13px/15px "Liberation Serif", "Times New Roman", serif;
    box-shadow: 0 0 4px #bdc1c6;
}

.brand {
    display: flex;
    align-items: flex-end;
    gap: 10px;
    height: 60px;
    margin-left: 20px;
    font: bold 19px/24px "Liberation Sans", Arial, sans-serif;
}

.brand span {
    padding-bottom: 8px;
}

.brand text {
    font: bold 22px "Liberation Sans", Arial, sans-serif;
    fill: #fff;
    text-anchor: middle;
}

.worksheet h2 {
    margin: 10px 0 9px 23px;
    font: bold 17px/20px "Liberation Sans", Arial, sans-serif;
}

.worksheet table {
    border-collapse: collapse;
    table-layout: fixed;
    color: #1a1a1a;
}

.worksheet td {
    padding: 0;
    border: 2px solid #1a1a1a;
    font: bold 10px/14px "Liberation Sans", Arial, sans-serif;
}

.letters {
    width: 518px;
    margin-left: 22px;
}

.letters td {
    height: 30px;
    padding: 2px 0 0 6px;
    vertical-align: top;
}

.intro {
    margin: 7px 0 25px 23px;
}

.match {
    display: flex;
}

.answers {
    width: 87px;
    height: 368px;
    text-align: center;
}

.figures + .answers {
    width: 90px;
}

.answers sup {
    font-size: 7px;
    line-height: 0;
    vertical-align: 5px;
}

.figures {
    overflow: visible;
}

.figures .bold {
    font: bold 12px "Liberation Sans", Arial, sans-serif;
}

.figures .size {
    font: 10px "Noto Sans", sans-serif;
    fill: #333;
}

.figures .shape {
    fill: #d0d1d3;
    stroke: #333;
}

.figures .line {
    fill: none;
    stroke: #333;
}

.problems {
    display: grid;
    grid-template-columns: 15px auto;
    margin: 26px 0 0 118px;
    row-gap: 13px;
}

.problems dt {
    font: bold 12px/15px "Liberation Sans", Arial, sans-serif;
}

.problems dd {
    margin: 0;
}

/* floating buttons */

.chat {
    position: fixed;
    left: 26px;
    bottom: 27px;
    width: 83px;
    height: 83px;
    padding-bottom: 4px;
    border-radius: 50%;
    background: #03bd9b;
    box-shadow: 0 2px 12px rgba(0, 0, 0, 0.5);
}

.explore {
    position: fixed;
    right: 104px;
    bottom: 12px;
    width: 61px;
    height: 61px;
    border-radius: 4px;
    background: #f8f8f8;
    box-shadow: 0 0 3px rgba(0, 0, 0, 0.5);
}

.side-tab {
    position: fixed;
    right: 0;
    bottom: 12px;
    width: 40px;
    height: 67px;
    padding-left: 5px;
    border-radius: 34px 0 0 34px;
    background: #fff;
    box-shadow: 0 1px 5px rgba(0, 0, 0, 0.5);
}
```
